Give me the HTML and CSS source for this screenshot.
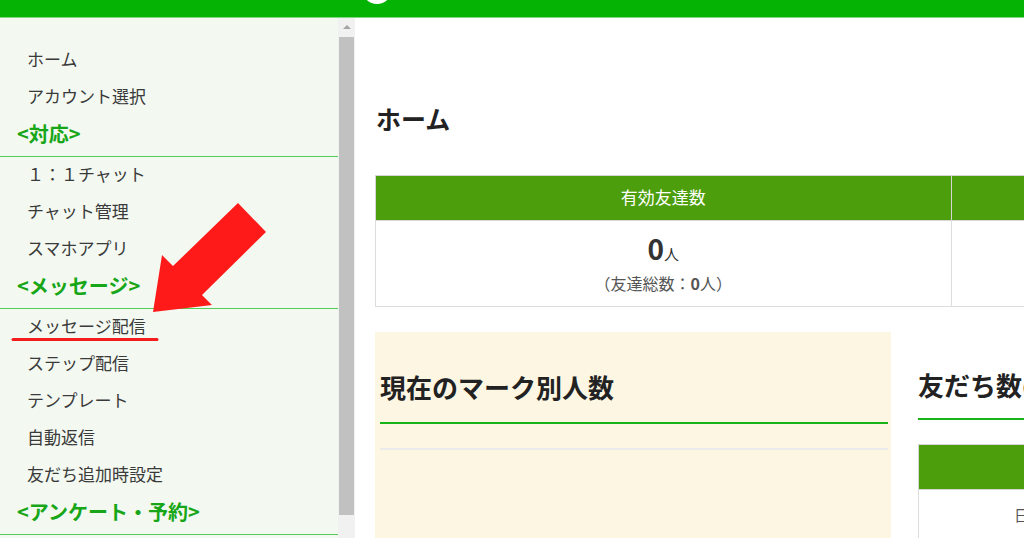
FILE: index.html
```html
<!DOCTYPE html>
<html lang="ja">
<head>
    <meta charset="UTF-8">
    <meta name="viewport" content="width=device-width, initial-scale=1.0">
    <title>ホーム</title>
    <link rel="stylesheet" href="styles.css">
</head>
<body>
    <div class="topbar">
        <div class="logo"></div>
    </div>

    <div class="layout">
        <div class="sidebar">
            <div class="side-menu">
                <div class="side-item">ホーム</div>
                <div class="side-item">アカウント選択</div>
                <div class="side-head">&lt;対応&gt;</div>
                <div class="side-item">１：１チャット</div>
                <div class="side-item">チャット管理</div>
                <div class="side-item">スマホアプリ</div>
                <div class="side-head">&lt;メッセージ&gt;</div>
                <div class="side-item">メッセージ配信</div>
                <div class="side-item">ステップ配信</div>
                <div class="side-item">テンプレート</div>
                <div class="side-item">自動返信</div>
                <div class="side-item">友だち追加時設定</div>
                <div class="side-head">&lt;アンケート・予約&gt;</div>
            </div>
            <div class="scrollbar">
                <div class="scroll-up"></div>
                <div class="scroll-thumb"></div>
            </div>
        </div>

        <div class="main">
            <h1 class="page-title">ホーム</h1>

            <table class="stats">
                <tr>
                    <th>有効友達数</th>
                    <th></th>
                </tr>
                <tr>
                    <td>
                        <div class="count">0<span>人</span></div>
                        <div class="total">（友達総数：<b>0</b>人）</div>
                    </td>
                    <td></td>
                </tr>
            </table>

            <div class="lower">
                <div class="mark-box">
                    <h2 class="box-title">現在のマーク別人数</h2>
                    <div class="box-divider"></div>
                </div>
                <div class="friends-box">
                    <h2 class="box-title">友だち数の推移</h2>
                    <table class="friends">
                        <tr>
                            <th></th>
                            <th></th>
                        </tr>
                        <tr>
                            <td>日付</td>
                            <td></td>
                        </tr>
                    </table>
                </div>
            </div>
        </div>

        <svg class="annotation" viewBox="0 18 338 520" width="338" height="520">
            <polygon points="153,312 162,255 173,266 238,203 266,232 202,295 212,305" fill="#ff1a1a"/>
            <line x1="13" y1="339.5" x2="157" y2="339.5" stroke="#f41c1c" stroke-width="3" stroke-linecap="round"/>
        </svg>
    </div>
</body>
</html>
```

FILE: styles.css
```css
body {
    margin: 0;
    font-family: "Noto Sans CJK JP", "Noto Sans", sans-serif;
    color: #333;
    overflow: hidden;
    height: 538px;
}

.topbar {
    height: 17px;
    background-color: #05b305;
    border-bottom: 1px solid #80d880;
    overflow: hidden;
    display: flex;
}

.logo {
    width: 30px;
    height: 30px;
    margin-left: 362px;
    margin-top: -26px;
    border-radius: 50%;
    background-color: #fff;
}

.layout {
    position: relative;
    display: flex;
    height: 520px;
    overflow: hidden;
}

.sidebar {
    display: flex;
    flex-shrink: 0;
}

.side-menu {
    width: 338px;
    padding-top: 24px;
    background-color: #f3f9f1;
}

.side-item {
    height: 37px;
    line-height: 33px;
    padding-left: 27px;
    font-size: 17px;
    color: #3a3a3a;
}

.side-head {
    line-height: 36px;
    padding-left: 17px;
    padding-bottom: 4px;
    border-bottom: 1px solid #55cc55;
    font-size: 20px;
    font-weight: bold;
    color: #17a617;
}

.scrollbar {
    width: 17px;
    background-color: #f1f1f1;
    display: flex;
    flex-direction: column;
    align-items: center;
}

.scroll-up {
    margin-top: 7px;
    width: 0;
    height: 0;
    border-left: 4px solid transparent;
    border-right: 4px solid transparent;
    border-bottom: 4px solid #a3a3a3;
}

.scroll-thumb {
    margin-top: 8px;
    width: 15px;
    height: 478px;
    background-color: #c1c1c1;
}

.main {
    flex: 1;
    padding-left: 20px;
    padding-top: 84px;
    background-color: #fff;
    overflow: hidden;
}

.page-title {
    margin: 0 0 41px 1px;
    font-size: 25px;
    line-height: 32px;
    color: #222;
}

.stats {
    border-collapse: collapse;
    width: 1152px;
    table-layout: fixed;
}

.stats th,
.friends th {
    background-color: #4c9e0d;
    color: #fff;
    font-weight: normal;
    font-size: 17px;
    height: 40px;
    padding: 0 0 4px;
    border: 1px solid #d6d6d6;
}

.stats td {
    border: 1px solid #ddd;
    text-align: center;
    padding: 10px 0 12px;
}

.count {
    height: 34px;
    line-height: 34px;
    font-size: 28px;
    font-weight: bold;
    color: #333;
}

.count span {
    font-size: 15px;
    font-weight: normal;
    line-height: 1;
}

.total {
    margin-top: 7px;
    height: 22px;
    line-height: 22px;
    font-size: 16px;
    color: #555;
}

.lower {
    display: flex;
    gap: 27px;
    margin-top: 25px;
    width: 1100px;
}

.mark-box {
    width: 508px;
    height: 240px;
    padding: 37px 3px 0 5px;
    background-color: #fcf6e3;
}

.mark-box .box-title {
    padding-bottom: 17px;
}

.box-title {
    margin: 0;
    padding-bottom: 15px;
    border-bottom: 2px solid #17b317;
    font-size: 26px;
    line-height: 36px;
    color: #222;
}

.box-divider {
    margin-top: 24px;
    height: 2px;
    background-color: #ebebeb;
}

.friends-box {
    width: 516px;
    padding-top: 35px;
}

.friends {
    margin-top: 24px;
    border-collapse: collapse;
    width: 516px;
    table-layout: fixed;
}

.friends th:first-child,
.friends td:first-child {
    width: 220px;
}

.friends td {
    height: 46px;
    border: 1px solid #ddd;
    text-align: center;
    font-size: 15px;
    color: #555;
}

.annotation {
    position: absolute;
    left: 0;
    top: 0;
}
```
